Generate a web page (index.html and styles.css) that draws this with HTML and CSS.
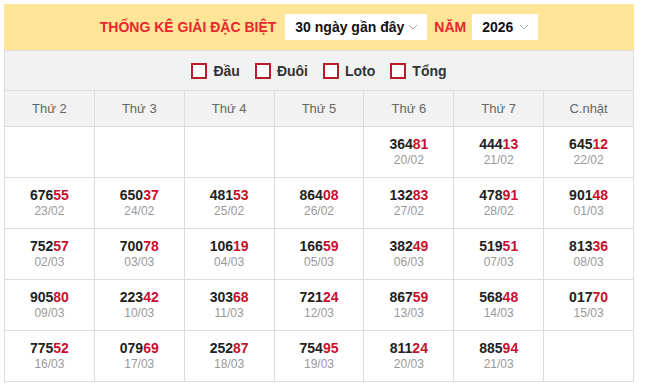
FILE: index.html
```html
<!DOCTYPE html>
<html lang="vi">
<head>
<meta charset="utf-8">
<link rel="stylesheet" href="styles.css">
</head>
<body>
<div class="box">
  <div class="top">
    <span class="title">THỐNG KÊ GIẢI ĐẶC BIỆT</span>
    <div class="sel sel-days"><span>30 ngày gần đây</span><svg class="chev" width="10" height="6" viewBox="0 0 10 6"><path d="M1 1 L5 5 L9 1" fill="none" stroke="#aaa" stroke-width="1"/></svg></div>
    <span class="title nam">NĂM</span>
    <div class="sel sel-year"><span>2026</span><svg class="chev" width="10" height="6" viewBox="0 0 10 6"><path d="M1 1 L5 5 L9 1" fill="none" stroke="#aaa" stroke-width="1"/></svg></div>
  </div>
  <div class="filters">
    <label class="chk"><span class="sq"></span>Đầu</label>
    <label class="chk"><span class="sq"></span>Đuôi</label>
    <label class="chk"><span class="sq"></span>Loto</label>
    <label class="chk"><span class="sq"></span>Tổng</label>
  </div>
  <div class="cal">
    <div class="hd">Thứ 2</div><div class="hd">Thứ 3</div><div class="hd">Thứ 4</div><div class="hd">Thứ 5</div><div class="hd">Thứ 6</div><div class="hd">Thứ 7</div><div class="hd">C.nhật</div>

    <div class="c"></div><div class="c"></div><div class="c"></div><div class="c"></div>
    <div class="c"><b>364<i>81</i></b><small>20/02</small></div>
    <div class="c"><b>444<i>13</i></b><small>21/02</small></div>
    <div class="c"><b>645<i>12</i></b><small>22/02</small></div>

    <div class="c"><b>676<i>55</i></b><small>23/02</small></div>
    <div class="c"><b>650<i>37</i></b><small>24/02</small></div>
    <div class="c"><b>481<i>53</i></b><small>25/02</small></div>
    <div class="c"><b>864<i>08</i></b><small>26/02</small></div>
    <div class="c"><b>132<i>83</i></b><small>27/02</small></div>
    <div class="c"><b>478<i>91</i></b><small>28/02</small></div>
    <div class="c"><b>901<i>48</i></b><small>01/03</small></div>

    <div class="c"><b>752<i>57</i></b><small>02/03</small></div>
    <div class="c"><b>700<i>78</i></b><small>03/03</small></div>
    <div class="c"><b>106<i>19</i></b><small>04/03</small></div>
    <div class="c"><b>166<i>59</i></b><small>05/03</small></div>
    <div class="c"><b>382<i>49</i></b><small>06/03</small></div>
    <div class="c"><b>519<i>51</i></b><small>07/03</small></div>
    <div class="c"><b>813<i>36</i></b><small>08/03</small></div>

    <div class="c"><b>905<i>80</i></b><small>09/03</small></div>
    <div class="c"><b>223<i>42</i></b><small>10/03</small></div>
    <div class="c"><b>303<i>68</i></b><small>11/03</small></div>
    <div class="c"><b>721<i>24</i></b><small>12/03</small></div>
    <div class="c"><b>867<i>59</i></b><small>13/03</small></div>
    <div class="c"><b>568<i>48</i></b><small>14/03</small></div>
    <div class="c"><b>017<i>70</i></b><small>15/03</small></div>

    <div class="c"><b>775<i>52</i></b><small>16/03</small></div>
    <div class="c"><b>079<i>69</i></b><small>17/03</small></div>
    <div class="c"><b>252<i>87</i></b><small>18/03</small></div>
    <div class="c"><b>754<i>95</i></b><small>19/03</small></div>
    <div class="c"><b>811<i>24</i></b><small>20/03</small></div>
    <div class="c"><b>885<i>94</i></b><small>21/03</small></div>
    <div class="c"></div>
  </div>
</div>
</body>
</html>
```
FILE: styles.css
```css
html, body {
  margin: 0;
  padding: 0;
  background: #fff;
}
body {
  padding: 4px;
  font-family: "Liberation Sans", Arial, sans-serif;
}
.box {
  width: 630px;
}
.top {
  height: 46px;
  background: #ffe597;
  display: flex;
  align-items: center;
  justify-content: center;
}
.title {
  color: #e8262d;
  font-weight: bold;
  font-size: 14px;
  margin-right: 9px;
}
.nam {
  margin-left: 7px;
  margin-right: 6px;
}
.sel {
  height: 26px;
  background: #fff;
  display: flex;
  align-items: center;
  padding: 0 9px 0 10px;
  box-sizing: border-box;
  font-size: 14px;
  font-weight: bold;
  color: #111;
  justify-content: space-between;
}
.sel-days { width: 142px; }
.sel-year { width: 66px; }
.chev { display: block; }
.filters {
  height: 39px;
  border: 1px solid #ddd;
  border-bottom: none;
  background: #f2f2f2;
  display: flex;
  align-items: center;
  justify-content: center;
  gap: 15px;
}
.chk {
  display: flex;
  align-items: center;
  gap: 6px;
  font-size: 14px;
  font-weight: bold;
  color: #333;
}
.sq {
  width: 16px;
  height: 16px;
  box-sizing: border-box;
  border: 2px solid #b71c2a;
  background: #fff;
}
.cal {
  display: grid;
  grid-template-columns: repeat(7, 1fr);
  gap: 1px;
  background: #ddd;
  border: 1px solid #ddd;
}
.hd {
  height: 35px;
  background: #f2f2f2;
  color: #666;
  font-size: 13px;
  display: flex;
  align-items: center;
  justify-content: center;
}
.c {
  height: 50px;
  background: #fff;
  display: flex;
  flex-direction: column;
  align-items: center;
  justify-content: center;
}
.c b {
  font-size: 14px;
  line-height: 17px;
  color: #222;
}
.c i {
  font-style: normal;
  color: #c8102e;
}
.c small {
  font-size: 12px;
  line-height: 15px;
  color: #999;
}
```
